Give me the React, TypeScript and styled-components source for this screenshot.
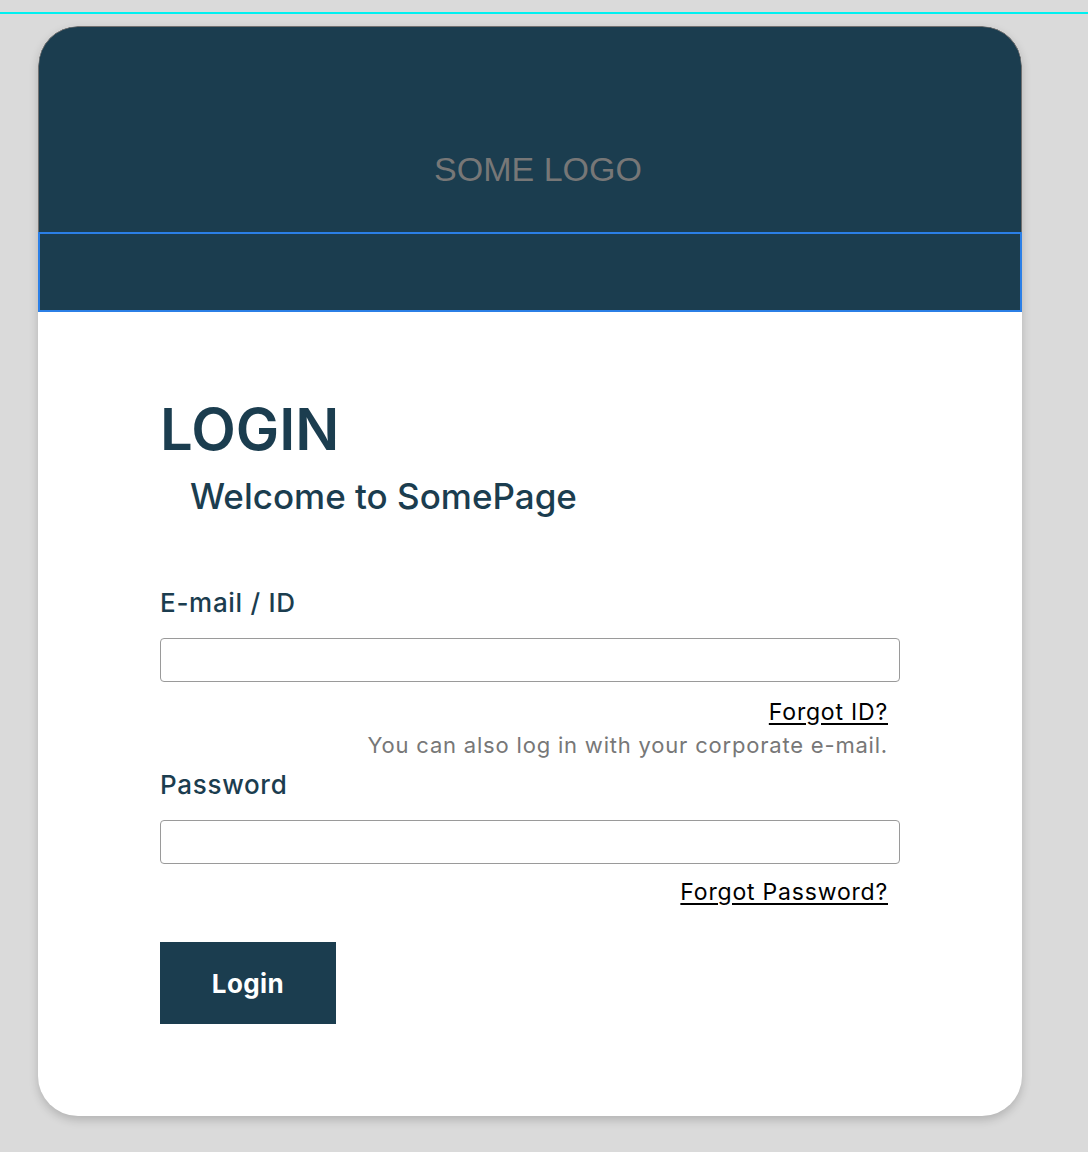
import React from 'react';
import styled, { createGlobalStyle } from 'styled-components';

const PALETTE = {
  NAVY: '#1b3d4f',
  PAGE: '#dadada',
  GRAY: '#777777',
  BORDER: '#9a9a9a',
  BLUE: '#2b7fe6',
  CYAN: '#00f0f0',
};

const BODY_FONT = "Inter, 'Noto Sans', 'Liberation Sans', sans-serif";

const GlobalStyle = createGlobalStyle`
  body {
    margin: 0;
    background-color: ${PALETTE.PAGE};
    font-family: ${BODY_FONT};
  }
`;

const Page = styled.div`
  padding-top: 12px;
  padding-bottom: 36px;
`;

const TopRule = styled.div`
  height: 2px;
  background-color: ${PALETTE.CYAN};
`;

const Card = styled.div`
  margin: 12px 0 0 38px;
  width: 984px;
  background-color: white;
  border-radius: 40px;
  overflow: hidden;
  box-shadow: 0 4px 10px rgba(0, 0, 0, 0.18);
`;

const Header = styled.header`
  height: 206px;
  box-sizing: border-box;
  display: flex;
  justify-content: center;
  padding: 122px 0 0 16px;
  background-color: ${PALETTE.NAVY};
  border: 1px solid #707070;
  border-bottom: none;
  border-radius: 40px 40px 0 0;
`;

const Logo = styled.div`
  font-family: 'Liberation Sans', Arial, sans-serif;
  font-size: 34px;
  line-height: 40px;
  color: ${PALETTE.GRAY};
`;

const Banner = styled.div`
  height: 80px;
  box-sizing: border-box;
  background-color: ${PALETTE.NAVY};
  border: 2px solid ${PALETTE.BLUE};
`;

const Body = styled.main`
  display: flex;
  flex-direction: column;
  padding: 82px 122px 92px;
  color: ${PALETTE.NAVY};
`;

const Title = styled.h1`
  margin: 0;
  font-size: 58px;
  line-height: 70px;
  font-weight: 600;
`;

const Welcome = styled.h2`
  margin: 10px 0 0 30px;
  font-size: 35px;
  line-height: 44px;
  font-weight: 500;
`;

const Label = styled.label<{ $top: number }>`
  margin-top: ${(p) => p.$top}px;
  font-size: 26px;
  line-height: 32px;
  font-weight: 500;
  letter-spacing: 0.7px;
`;

const Input = styled.input`
  margin-top: 19px;
  height: 44px;
  box-sizing: border-box;
  border: 1px solid ${PALETTE.BORDER};
  border-radius: 4px;
  background: white;
  font-size: 20px;
  padding: 0 12px;
`;

const LinkRow = styled.div<{ $top: number }>`
  display: flex;
  flex-direction: column;
  align-items: flex-end;
  margin-top: ${(p) => p.$top}px;
  margin-right: 12px;
`;

const HelpLink = styled.a`
  font-size: 23px;
  line-height: 28px;
  letter-spacing: 0.8px;
  color: black;
  text-decoration: underline;
  text-underline-offset: 3px;
`;

const Hint = styled.p`
  margin: 5px 0 0;
  font-size: 22px;
  line-height: 28px;
  letter-spacing: 0.8px;
  color: ${PALETTE.GRAY};
`;

const LoginButton = styled.button`
  margin-top: 36px;
  align-self: flex-start;
  width: 176px;
  height: 82px;
  border: none;
  background-color: ${PALETTE.NAVY};
  color: white;
  font-family: ${BODY_FONT};
  font-size: 26px;
  font-weight: 700;
  letter-spacing: 0.4px;
  cursor: pointer;
`;

export default function App() {
  return (
    <>
      <GlobalStyle />
      <Page>
        <TopRule />
        <Card>
          <Header>
            <Logo>SOME LOGO</Logo>
          </Header>
          <Banner />
          <Body>
            <Title>LOGIN</Title>
            <Welcome>Welcome to SomePage</Welcome>
            <Label $top={69} htmlFor="email">E-mail / ID</Label>
            <Input id="email" type="text" />
            <LinkRow $top={16}>
              <HelpLink href="#">Forgot ID?</HelpLink>
              <Hint>You can also log in with your corporate e-mail.</Hint>
            </LinkRow>
            <Label $top={10} htmlFor="password">Password</Label>
            <Input id="password" type="password" />
            <LinkRow $top={14}>
              <HelpLink href="#">Forgot Password?</HelpLink>
            </LinkRow>
            <LoginButton type="button">Login</LoginButton>
          </Body>
        </Card>
      </Page>
    </>
  );
}
